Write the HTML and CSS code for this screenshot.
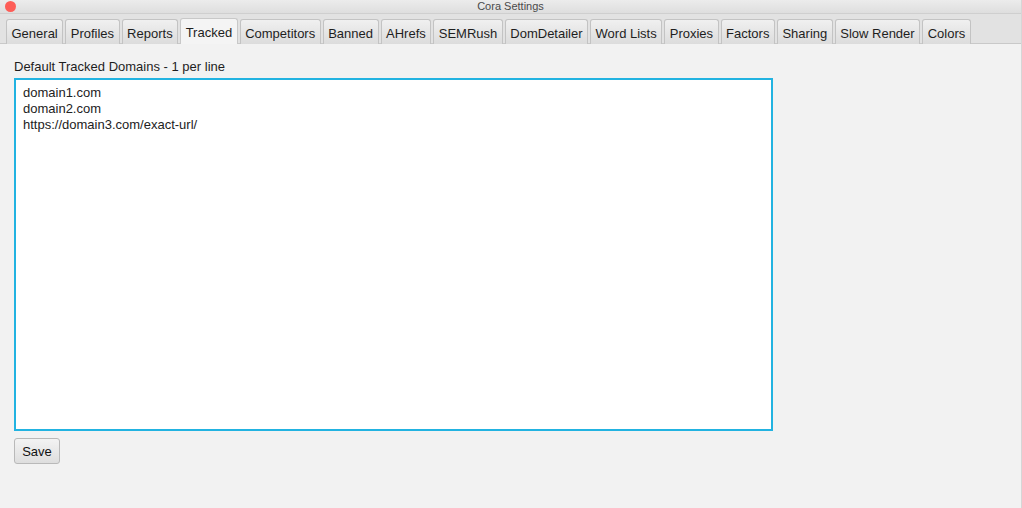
FILE: index.html
```html
<!DOCTYPE html>
<html>
<head>
<meta charset="utf-8">
<link rel="stylesheet" href="styles.css">
</head>
<body>
<div class="window">
  <div class="titlebar">
    <span class="close"></span>
    <span class="title">Cora Settings</span>
  </div>
  <div class="tabs">
    <div class="tab">General</div>
    <div class="tab">Profiles</div>
    <div class="tab">Reports</div>
    <div class="tab active">Tracked</div>
    <div class="tab">Competitors</div>
    <div class="tab">Banned</div>
    <div class="tab">AHrefs</div>
    <div class="tab">SEMRush</div>
    <div class="tab">DomDetailer</div>
    <div class="tab">Word Lists</div>
    <div class="tab">Proxies</div>
    <div class="tab">Factors</div>
    <div class="tab">Sharing</div>
    <div class="tab">Slow Render</div>
    <div class="tab">Colors</div>
  </div>
  <div class="content">
    <div class="label">Default Tracked Domains - 1 per line</div>
    <div class="textarea">
      <div class="line">domain1.com</div>
      <div class="line">domain2.com</div>
      <div class="line">https://domain3.com/exact-url/</div>
    </div>
    <button class="save">Save</button>
  </div>
</div>
</body>
</html>
```

FILE: styles.css
```css
* { box-sizing: border-box; }
html, body {
  margin: 0;
  padding: 0;
  width: 1022px;
  height: 508px;
  overflow: hidden;
  font-family: "Liberation Sans", Arial, sans-serif;
  font-size: 13px;
  color: #222;
  background: #f2f2f2;
}
.window {
  display: flex;
  flex-direction: column;
  height: 508px;
  border-right: 1px solid #d6d6d6;
}
.titlebar {
  height: 13px;
  background: linear-gradient(#ececec, #dedede);
  position: relative;
  display: flex;
  justify-content: center;
  align-items: center;
}
.close {
  position: absolute;
  left: 5px;
  top: 1px;
  width: 11px;
  height: 11px;
  border-radius: 50%;
  background: #fd5d57;
}
.title {
  font-size: 11px;
  color: #4a4a4a;
  line-height: 13px;
}
.tabs {
  height: 31px;
  background: #e2e2e2;
  border-top: 1px solid #cfcfcf;
  border-bottom: 1px solid #c9c9c9;
  display: flex;
  align-items: flex-end;
  padding-left: 6px;
  gap: 2px;
}
.tab {
  height: 25px;
  padding: 2px 4.5px 0 4.5px;
  display: flex;
  align-items: center;
  border: 1px solid #c3c3c3;
  border-bottom: none;
  border-radius: 3px 3px 0 0;
  background: linear-gradient(#f0f0f0, #dcdcdc);
  color: #1e1e1e;
  margin-bottom: -1px;
}
.tab.active {
  background: #f4f4f4;
  border-color: #c8c8c8;
  height: 26px;
}
.content {
  flex: 1;
  padding: 14px 14px 0 14px;
  display: flex;
  flex-direction: column;
  align-items: flex-start;
}
.label {
  height: 17px;
  line-height: 17px;
  margin-bottom: 3px;
  color: #1e1e1e;
}
.textarea {
  width: 759px;
  height: 353px;
  background: #fff;
  border: 2px solid #22b3e1;
  padding: 5px 7px;
}
.line {
  line-height: 16px;
  color: #222;
}
.save {
  margin-top: 7px;
  width: 46px;
  height: 26px;
  font-family: "Liberation Sans", Arial, sans-serif;
  font-size: 13px;
  color: #111;
  border: 1px solid #b9b9b9;
  border-radius: 3px;
  background: linear-gradient(#f3f3f3, #dedede);
  padding: 0;
}
```
